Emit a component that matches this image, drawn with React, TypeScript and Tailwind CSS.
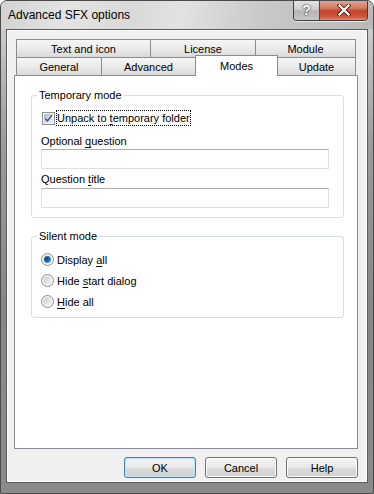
import React from "react";

const F = "font-['Liberation_Sans',Arial,sans-serif]";

function Tab({ label, className }: { label: string; className: string }) {
  return (
    <div
      className={`flex items-center justify-center border-[#898c95] bg-gradient-to-b from-[#f6f6f6] via-[#ebebeb] to-[#dadada] text-[11px] leading-[14px] text-black ${className}`}
    >
      {label}
    </div>
  );
}

function CheckBox() {
  return (
    <svg width="13" height="13" viewBox="0 0 13 13" className="shrink-0">
      <defs>
        <linearGradient id="cbg" x1="0" y1="0" x2="1" y2="1">
          <stop offset="0" stopColor="#aeb8c6" />
          <stop offset="1" stopColor="#eef2f6" />
        </linearGradient>
      </defs>
      <rect x="0.5" y="0.5" width="12" height="12" fill="#f6f6f6" stroke="#8e8f8f" />
      <rect x="2" y="2" width="9" height="9" fill="url(#cbg)" />
      <path d="M3.2 6.4 L5.4 8.9 L9.8 3.2" stroke="#ffffff" strokeWidth="2.6" fill="none" />
      <path d="M3.2 6.4 L5.4 8.9 L9.8 3.2" stroke="#3e5a8e" strokeWidth="1.6" fill="none" />
    </svg>
  );
}

function Radio({ checked }: { checked?: boolean }) {
  return (
    <svg width="13" height="13" viewBox="0 0 13 13" className="shrink-0">
      <defs>
        <linearGradient id="rbg" x1="0" y1="0" x2="1" y2="1">
          <stop offset="0" stopColor="#c9c9c9" />
          <stop offset="1" stopColor="#f8f8f8" />
        </linearGradient>
        <radialGradient id="rsel" cx="0.4" cy="0.4" r="0.7">
          <stop offset="0" stopColor="#0f3f6e" />
          <stop offset="0.55" stopColor="#1d6fb0" />
          <stop offset="1" stopColor="#7fc0ea" />
        </radialGradient>
      </defs>
      <circle cx="6.5" cy="6.5" r="6" fill="#f4f4f4" stroke="#8e8f8f" />
      <circle cx="6.5" cy="6.5" r="4.2" fill="url(#rbg)" />
      {checked && <circle cx="6.5" cy="6.5" r="3.6" fill="url(#rsel)" />}
    </svg>
  );
}

function Btn({ label, def }: { label: string; def?: boolean }) {
  return (
    <div
      className={`flex h-[21px] w-[72px] items-center justify-center rounded-[3px] border text-[11px] leading-[14px] text-black bg-[linear-gradient(to_bottom,#f2f2f2_0%,#ebebeb_48%,#dddddd_52%,#cfcfcf_100%)] ${
        def
          ? "border-[#3c7fb1] shadow-[inset_0_0_0_1px_#bde6fa]"
          : "border-[#707070] shadow-[inset_0_0_0_1px_#fbfbfb]"
      }`}
    >
      {label}
    </div>
  );
}

function Group({
  title,
  className,
  children,
}: {
  title: string;
  className: string;
  children: React.ReactNode;
}) {
  return (
    <div className={`relative w-[313px] rounded-[3px] border border-[#d5dfe5] ${className}`}>
      <span className="absolute -top-[8px] left-[5px] bg-white px-[2px] text-[11px] leading-[14px] text-black">
        {title}
      </span>
      {children}
    </div>
  );
}

export default function App() {
  return (
    <div
      className={`${F} flex h-[494px] w-[374px] flex-col overflow-hidden rounded-t-[7px] border border-[#4a4a4a] bg-[linear-gradient(to_bottom,#d9d9d9_0px,#c6c6c6_40px,#9c9c9c_140px,#878787_300px,#8b8b8b_494px)]`}
    >
      {/* title bar */}
      <div className="flex h-[28px] shrink-0 items-start justify-between bg-[linear-gradient(100deg,#d2d2d2_0%,#e4e4e4_18%,#d9d9d9_35%,#e2e2e2_48%,#c9c9c9_70%,#b8b8b8_100%)] pl-[7px] pr-[5px]">
        <div className="flex h-[28px] items-center text-[12px] leading-[14px] text-black">
          Advanced SFX options
        </div>
        <div className="-mt-[1px] flex h-[21px] overflow-hidden rounded-b-[4px] border border-t-0 border-[#3d3d3d] shadow-[0_1px_0_#e8e8e8]">
          <div className="flex w-[26px] items-center justify-center border-r border-[#4a4a4a] bg-[linear-gradient(to_bottom,#e4e4e4_0%,#d0d0d0_45%,#b4b4b4_55%,#c8c8c8_100%)] text-[14px] font-bold leading-[14px] text-white [text-shadow:0_0_2px_#333,0_0_1px_#222]">
            ?
          </div>
          <div className="flex w-[47px] items-center justify-center bg-[linear-gradient(to_bottom,#e9a694_0%,#d67a64_40%,#c2432b_55%,#cd5a40_85%,#e08a6c_100%)]">
            <svg width="14" height="12" viewBox="0 0 14 12">
              <path d="M2.5 1.5 L11.5 10.5 M11.5 1.5 L2.5 10.5" stroke="#5a1d12" strokeWidth="4" strokeLinecap="square" />
              <path d="M2.5 1.5 L11.5 10.5 M11.5 1.5 L2.5 10.5" stroke="#ffffff" strokeWidth="2.2" strokeLinecap="square" />
            </svg>
          </div>
        </div>
      </div>

      {/* body */}
      <div className="flex flex-1 px-[5px] pb-[10px]">
        <div className="flex h-[454px] w-[362px] flex-col border border-[#5c5c5c] bg-[#f0f0f0] pt-[9px] shadow-[inset_0_0_0_1px_#fbfbfb]">
          {/* tabs row 1 */}
          <div className="ml-[9px] flex h-[18px]">
            <Tab label="Text and icon" className="w-[134px] border-l border-t" />
            <Tab label="License" className="w-[105px] border-l border-t" />
            <Tab label="Module" className="w-[101px] border-l border-r border-t" />
          </div>
          {/* tabs row 2 */}
          <div className="ml-[9px] flex h-[18px] items-start">
            <Tab label="General" className="h-[18px] w-[85px] border-l border-t" />
            <Tab label="Advanced" className="h-[18px] w-[94px] border-l border-t" />
            <div className="relative z-10 -mt-[2px] flex h-[21px] w-[83px] items-start justify-center border-l border-r border-t border-[#898c95] bg-white pt-[3px] text-[11px] leading-[14px] text-black">
              Modes
            </div>
            <Tab label="Update" className="h-[18px] w-[78px] border-r border-t" />
          </div>

          {/* panel */}
          <div className="ml-[7px] flex h-[374px] w-[344px] flex-col border border-[#898c95] bg-white">
            <Group title="Temporary mode" className="ml-[16px] mt-[19px] pb-[9px] pl-[9px] pt-[14px]">
              <div className="flex h-[16px] items-center">
                <div className="ml-[1px]">
                  <CheckBox />
                </div>
                <span className="ml-[1px] border border-dotted border-black text-[11px] leading-[14px] text-black">
                  Unpack to <span className="underline underline-offset-[2px]">t</span>emporary folder
                </span>
              </div>
              <div className="mt-[8px] h-[14px] text-[11px] leading-[14px] text-black">
                Optional <span className="underline underline-offset-[2px]">q</span>uestion
              </div>
              <div className="mt-[1px] h-[20px] w-[288px] border border-[#dbdfe6] border-t-[#abadb3] bg-white" />
              <div className="mt-[3px] h-[14px] text-[11px] leading-[14px] text-black">
                Question <span className="underline underline-offset-[2px]">t</span>itle
              </div>
              <div className="mt-[2px] h-[20px] w-[288px] border border-[#dbdfe6] border-t-[#abadb3] bg-white" />
            </Group>

            <Group title="Silent mode" className="ml-[16px] mt-[18px] pb-[5px] pl-[9px] pt-[12px]">
              <div className="flex h-[21px] items-center gap-[3px] text-[11px] leading-[14px] text-black">
                <Radio checked />
                <span>
                  Display <span className="underline underline-offset-[2px]">a</span>ll
                </span>
              </div>
              <div className="flex h-[21px] items-center gap-[3px] text-[11px] leading-[14px] text-black">
                <Radio />
                <span>
                  Hide <span className="underline underline-offset-[2px]">s</span>tart dialog
                </span>
              </div>
              <div className="flex h-[21px] items-center gap-[3px] text-[11px] leading-[14px] text-black">
                <Radio />
                <span>
                  <span className="underline underline-offset-[2px]">H</span>ide all
                </span>
              </div>
            </Group>
          </div>

          {/* buttons */}
          <div className="mt-[8px] flex justify-end gap-[9px] pr-[9px]">
            <Btn label="OK" def />
            <Btn label="Cancel" />
            <Btn label="Help" />
          </div>
        </div>
      </div>
    </div>
  );
}
